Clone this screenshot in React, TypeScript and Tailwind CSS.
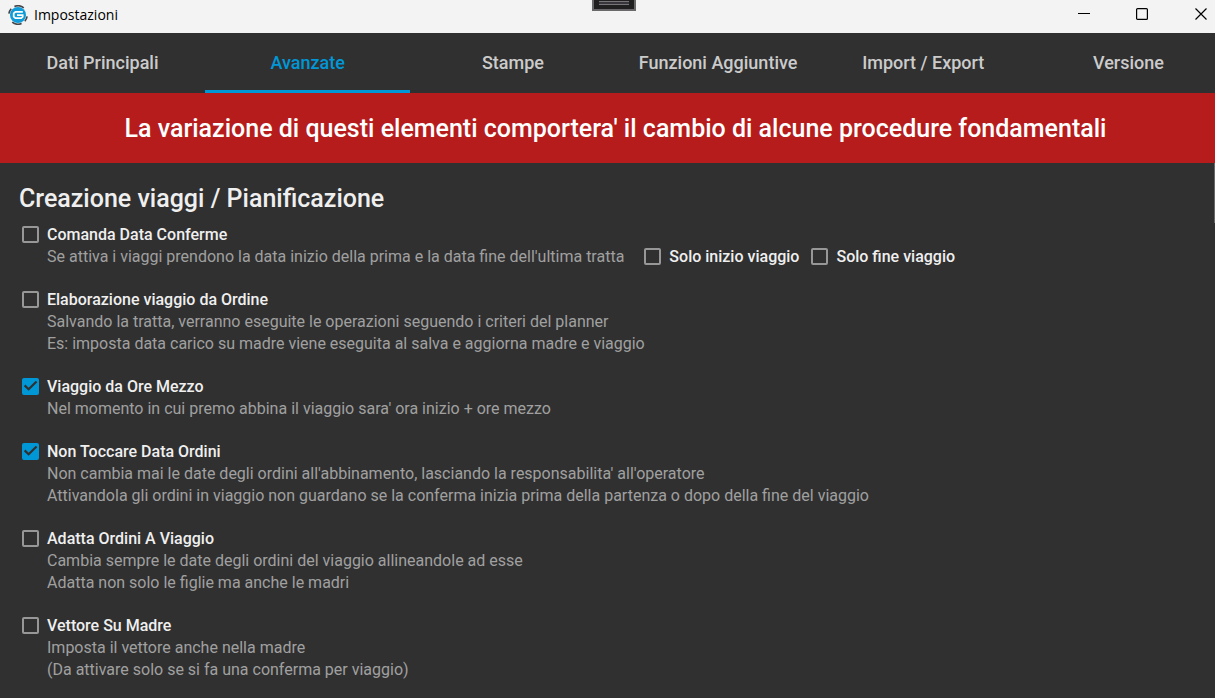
import { useState, type ReactNode } from 'react';

const tabs = ['Dati Principali', 'Avanzate', 'Stampe', 'Funzioni Aggiuntive', 'Import / Export', 'Versione'];

type Option = { id: string; title: string; lines: string[]; checked?: boolean; extras?: string[] };

const options: Option[] = [
  {
    id: 'comanda',
    title: 'Comanda Data Conferme',
    lines: ["Se attiva i viaggi prendono la data inizio della prima e la data fine dell'ultima tratta"],
    extras: ['Solo inizio viaggio', 'Solo fine viaggio'],
  },
  {
    id: 'elaborazione',
    title: 'Elaborazione viaggio da Ordine',
    lines: [
      'Salvando la tratta, verranno eseguite le operazioni seguendo i criteri del planner',
      'Es: imposta data carico su madre viene eseguita al salva e aggiorna madre e viaggio',
    ],
  },
  {
    id: 'ore-mezzo',
    title: 'Viaggio da Ore Mezzo',
    lines: ["Nel momento in cui premo abbina il viaggio sara' ora inizio + ore mezzo"],
    checked: true,
  },
  {
    id: 'data-ordini',
    title: 'Non Toccare Data Ordini',
    lines: [
      "Non cambia mai le date degli ordini all'abbinamento, lasciando la responsabilita' all'operatore",
      'Attivandola gli ordini in viaggio non guardano se la conferma inizia prima della partenza o dopo della fine del viaggio',
    ],
    checked: true,
  },
  {
    id: 'adatta',
    title: 'Adatta Ordini A Viaggio',
    lines: [
      'Cambia sempre le date degli ordini del viaggio allineandole ad esse',
      'Adatta non solo le figlie ma anche le madri',
    ],
  },
  {
    id: 'vettore',
    title: 'Vettore Su Madre',
    lines: ['Imposta il vettore anche nella madre', '(Da attivare solo se si fa una conferma per viaggio)'],
  },
];

function Check({ id, defaultChecked, children }: { id: string; defaultChecked?: boolean; children: ReactNode }) {
  return (
    <div className="flex h-[22px] items-center">
      <span className="mb-[1px] grid size-[17px] shrink-0">
        <input
          id={id}
          type="checkbox"
          defaultChecked={defaultChecked}
          className="peer col-start-1 row-start-1 size-[17px] appearance-none rounded-[2px] border-2 border-[#979797] checked:border-[#0097d7] checked:bg-[#0097d7]"
        />
        <svg
          viewBox="0 0 18 18"
          className="pointer-events-none invisible col-start-1 row-start-1 size-[17px] peer-checked:visible"
          fill="none"
          stroke="#303030"
          strokeWidth="2.3"
        >
          <path d="M2.8 7.8 7 12 15.4 3.8" />
        </svg>
      </span>
      <label htmlFor={id} className="pl-2 font-medium whitespace-nowrap text-[#efefef]">
        {children}
      </label>
    </div>
  );
}

function Logo() {
  return (
    <svg viewBox="0 0 20 20" className="size-5" fill="none">
      <circle cx="10" cy="10" r="8" fill="#0e9bd8" />
      <path
        d="M.9 8.6A9.2 9.2 0 0 1 3.2 3.8M6.4 1.5a9.2 9.2 0 0 1 9.4 1.4M19.1 11.4a9.2 9.2 0 0 1-2.3 4.8M13.6 18.5a9.2 9.2 0 0 1-9.4-1.4"
        stroke="#45464a"
        strokeWidth="1.6"
      />
      <path d="M14.8 6.8H7.4L5.7 8.3v3.4l1.7 1.5h5.8l1.5-1.3v-1.7H9" stroke="#fff" strokeWidth="1.7" />
    </svg>
  );
}

export default function App() {
  const [active, setActive] = useState('Avanzate');
  return (
    <div className="flex h-screen flex-col overflow-hidden bg-[#303030] font-['Roboto',sans-serif] text-base">
      <header className="relative flex h-[33px] shrink-0 items-start justify-between bg-[#f3f3f3] text-black">
        <div className="flex h-[29px] items-center gap-[6px] pl-2">
          <Logo />
          <h1 className="font-['Open_Sans',sans-serif] text-sm">Impostazioni</h1>
        </div>
        <div className="absolute top-0 left-[592px] flex h-[11px] w-11 justify-center border-2 border-t-0 border-[#6a686b] bg-[#202020]">
          <span className="mt-px h-1 w-[30px] border-y border-[#777579] bg-[#38363a]" />
        </div>
        <div className="flex h-7 items-center">
          <button aria-label="Riduci a icona" className="flex h-7 w-[58px] items-center justify-center">
            <svg viewBox="0 0 12 12" className="size-3" stroke="currentColor">
              <path d="M0 5.5h12" />
            </svg>
          </button>
          <button aria-label="Ingrandisci" className="flex h-7 w-[58px] items-center justify-center">
            <svg viewBox="0 0 12 12" className="size-3" fill="none" stroke="currentColor" strokeWidth="1.2">
              <rect x=".6" y=".6" width="10.8" height="10.8" rx="1" />
            </svg>
          </button>
          <button aria-label="Chiudi" className="flex h-7 w-11 items-center justify-end pr-2">
            <svg viewBox="0 0 12 12" className="size-3" stroke="currentColor" strokeWidth="1.2">
              <path d="m.5.5 11 11m0-11-11 11" />
            </svg>
          </button>
        </div>
      </header>

      <nav className="-mr-4 grid h-[60px] shrink-0 grid-cols-6">
        {tabs.map((tab) => (
          <button
            key={tab}
            onClick={() => setActive(tab)}
            className={
              tab === active
                ? 'border-b-3 border-[#0097d7] pt-0.5 text-lg font-medium text-[#0097d7]'
                : 'border-b-3 border-transparent pt-0.5 text-lg font-medium text-[#cbcbcb]'
            }
          >
            {tab}
          </button>
        ))}
      </nav>

      <div className="-mr-4 flex h-[70px] shrink-0 items-center justify-center bg-[#b71c1c] pt-0.5">
        <p className="text-[25px] font-medium whitespace-nowrap text-white">
          La variazione di questi elementi comportera' il cambio di alcune procedure fondamentali
        </p>
      </div>

      <main className="relative min-h-0 flex-1 overflow-hidden pt-[19px] pl-[19px]">
        <span className="absolute top-0 right-0 h-[60px] w-px bg-[#686868]" />
        <h2 className="mb-2 text-[25px] leading-[34px] font-medium text-[#efefef]">Creazione viaggi / Pianificazione</h2>
        <div className="flex flex-col gap-[21px] pl-[3px] leading-[22px]">
          {options.map((option) => (
            <section key={option.id}>
              <Check id={option.id} defaultChecked={option.checked}>
                {option.title}
              </Check>
              {option.lines.map((line) => (
                <div key={line} className="flex gap-3 pl-[25px] whitespace-nowrap text-[#a0a0a0]">
                  <p>{line}</p>
                  {option.extras && (
                    <div className="flex gap-3 pl-2">
                      {option.extras.map((extra) => (
                        <Check key={extra} id={extra.toLowerCase().replaceAll(' ', '-')}>
                          {extra}
                        </Check>
                      ))}
                    </div>
                  )}
                </div>
              ))}
            </section>
          ))}
        </div>
      </main>
    </div>
  );
}
